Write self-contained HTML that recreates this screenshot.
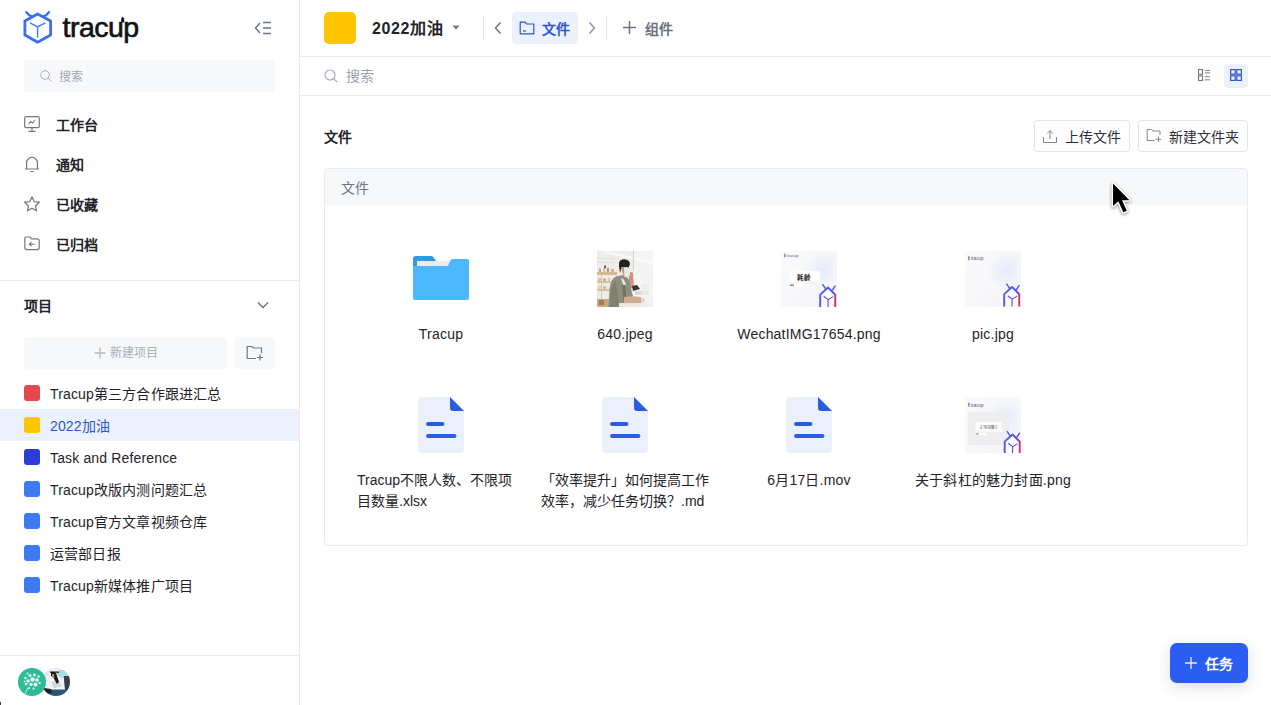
<!DOCTYPE html>
<html lang="zh-CN"><head><meta charset="utf-8">
<style>
*{box-sizing:border-box;margin:0;padding:0}
html,body{width:1271px;height:705px;overflow:hidden;background:#fff;font-family:"Liberation Sans",sans-serif;color:#1f2329}
.a{position:absolute}
.side{position:absolute;left:0;top:0;width:300px;height:705px;border-right:1px solid #e8eaee;background:#fff}
.navt{position:absolute;left:56px;font-size:14px;font-weight:bold;color:#1f2329;line-height:16px}
.nico{position:absolute;left:24px;width:16px;height:16px}
.proj{position:absolute;left:0;width:299px;height:32px}
.proj .sq{position:absolute;left:24px;top:8px;width:16px;height:16px;border-radius:3px}
.proj .t{position:absolute;left:50px;top:9px;font-size:14px;line-height:16px;letter-spacing:0.15px;color:#1f2329;white-space:nowrap}
.main{position:absolute;left:300px;top:0;width:971px;height:705px}
.item{position:absolute;width:184px;text-align:center}
.lblw{position:absolute;left:0;top:73px;width:184px;padding:0 8px;text-align:center;white-space:nowrap}
.lbl2{display:inline-block;text-align:left;font-size:14px;line-height:21px;letter-spacing:0.2px;color:#1f2329;word-break:break-all}
</style></head><body>
<div class="side">
  <!-- logo -->
  <svg class="a" style="left:0;top:0" width="60" height="50" viewBox="0 0 60 50">
    <path d="M37.6 14 L50.6 21 L50.6 35 L37.6 42.2 L24.9 35 L24.9 21 Z" fill="none" stroke="#3a6ff0" stroke-width="2.8" stroke-linejoin="round"/>
    <path d="M30 22.8 L37.6 26.8 L45.4 22.8 M37.6 26.8 L37.6 37.5" fill="none" stroke="#4a78ee" stroke-width="1.5"/>
    <path d="M26.3 12.2 Q28 15 32 16.5 M49 12.2 Q47.3 15 43.3 16.5" fill="none" stroke="#3a6ff0" stroke-width="2.4" stroke-linecap="round"/>
  </svg>
  <svg class="a" style="left:60px;top:8px" width="90" height="40" viewBox="0 0 90 40">
    <text x="2.5" y="28.8" font-family="Liberation Sans" font-size="28.5" letter-spacing="-0.5" fill="#131313" stroke="#131313" stroke-width="0.65">tracup</text>
    <path d="M61.2 14.5 V10.5 L62.7 8.8 L64.2 10.5 V14.5 Z" fill="#131313"/>
  </svg>
  <!-- collapse -->
  <svg class="a" style="left:254px;top:21px" width="18" height="14" viewBox="0 0 18 14">
    <path d="M6 2 L1.5 7 L6 12" fill="none" stroke="#6b7385" stroke-width="1.5"/>
    <path d="M9 1.5 H17 M9 7 H17 M9 12.5 H17" stroke="#6b7385" stroke-width="1.5"/>
  </svg>
  <!-- search -->
  <div class="a" style="left:24px;top:60px;width:251px;height:32px;background:#f7f8fa;border-radius:4px"></div>
  <svg class="a" style="left:40px;top:70px" width="12" height="12" viewBox="0 0 12 12">
    <circle cx="5" cy="5" r="4.3" fill="none" stroke="#a8aebb" stroke-width="1"/>
    <path d="M8.1 8.1 L11.4 11.4" stroke="#a8aebb" stroke-width="1"/>
  </svg>
  <div class="a" style="left:59px;top:69px;font-size:12px;line-height:16px;color:#a3a9b7">搜索</div>

  <!-- nav -->
  <svg class="nico" style="top:116px" viewBox="0 0 16 16">
    <rect x="0.7" y="0.7" width="14.6" height="11" rx="1.5" fill="none" stroke="#6f7789" stroke-width="1.2"/>
    <path d="M4.5 8 L6.5 5.5 L8.5 7 L11 4" fill="none" stroke="#6f7789" stroke-width="1.1"/>
    <path d="M8 12 V15 M4.5 15.3 H11.5" stroke="#6f7789" stroke-width="1.2"/>
  </svg>
  <div class="navt" style="top:117px">工作台</div>
  <svg class="nico" style="top:156px" viewBox="0 0 16 16">
    <path d="M2.6 13 V7 A5.4 5.6 0 0 1 13.4 7 V13" fill="none" stroke="#6f7789" stroke-width="1.2"/>
    <path d="M0.8 13 H15.2 M6.3 15.6 H9.7" stroke="#6f7789" stroke-width="1.2"/>
  </svg>
  <div class="navt" style="top:157px">通知</div>
  <svg class="nico" style="top:196px" viewBox="0 0 16 16">
    <path d="M8.00 0.90 L10.17 5.61 L15.32 6.22 L11.52 9.74 L12.53 14.83 L8.00 12.30 L3.47 14.83 L4.48 9.74 L0.68 6.22 L5.83 5.61 Z" fill="none" stroke="#6f7789" stroke-width="1.2" stroke-linejoin="round"/>
  </svg>
  <div class="navt" style="top:197px">已收藏</div>
  <svg class="nico" style="top:236px" viewBox="0 0 16 16">
    <path d="M0.8 3 Q0.8 1 2.8 1 H6 L7.6 2.8 H13.2 Q15.2 2.8 15.2 4.8 V11.6 Q15.2 13.6 13.2 13.6 H2.8 Q0.8 13.6 0.8 11.6 Z" fill="none" stroke="#6f7789" stroke-width="1.2" stroke-linejoin="round"/>
    <path d="M10.8 8.2 H5.4 M7.5 6.2 L5.4 8.2 L7.5 10.2" fill="none" stroke="#6f7789" stroke-width="1.1"/>
  </svg>
  <div class="navt" style="top:237px">已归档</div>

  <div class="a" style="left:0;top:280px;width:299px;height:1px;background:#e8eaee"></div>

  <div class="navt" style="left:24px;top:298px">项目</div>
  <svg class="a" style="left:257px;top:301px" width="12" height="9" viewBox="0 0 12 9">
    <path d="M1 1.5 L6 6.5 L11 1.5" fill="none" stroke="#6b7385" stroke-width="1.5"/>
  </svg>

  <div class="a" style="left:24px;top:337px;width:203px;height:32px;background:#f7f8fa;border-radius:4px"></div>
  <svg class="a" style="left:94px;top:347px" width="12" height="12" viewBox="0 0 12 12"><path d="M6 0.5 V11.5 M0.5 6 H11.5" stroke="#b4b9c4" stroke-width="1.3"/></svg>
  <div class="a" style="left:110px;top:345px;font-size:12px;line-height:16px;color:#a9aebb">新建项目</div>
  <div class="a" style="left:235px;top:337px;width:40px;height:32px;background:#f7f8fa;border-radius:4px"></div>
  <svg class="a" style="left:246px;top:345px" width="18" height="16" viewBox="0 0 18 16">
    <path d="M10 13.5 H1.2 V1.5 H6 L7.5 3 H15.5 V8" fill="none" stroke="#6f7789" stroke-width="1.2" stroke-linejoin="round"/>
    <path d="M14 9.5 V15.5 M11 12.5 H17" stroke="#6f7789" stroke-width="1.2"/>
  </svg>

  <div class="proj" style="top:377px"><div class="sq" style="background:#e5484d"></div><div class="t">Tracup第三方合作跟进汇总</div></div>
  <div class="proj" style="top:409px;background:#ebf1fd"><div class="sq" style="background:#ffc400"></div><div class="t" style="color:#2c56cc">2022加油</div></div>
  <div class="proj" style="top:441px"><div class="sq" style="background:#2a3bd6"></div><div class="t">Task and Reference</div></div>
  <div class="proj" style="top:473px"><div class="sq" style="background:#3d7bf5"></div><div class="t">Tracup改版内测问题汇总</div></div>
  <div class="proj" style="top:505px"><div class="sq" style="background:#3d7bf5"></div><div class="t">Tracup官方文章视频仓库</div></div>
  <div class="proj" style="top:537px"><div class="sq" style="background:#3d7bf5"></div><div class="t">运营部日报</div></div>
  <div class="proj" style="top:569px"><div class="sq" style="background:#3d7bf5"></div><div class="t">Tracup新媒体推广项目</div></div>

  <div class="a" style="left:0;top:655px;width:299px;height:1px;background:#e8eaee"></div>
  <!-- avatars -->
  <svg class="a" style="left:18px;top:668px" width="54" height="28" viewBox="0 0 54 28">
    <defs><clipPath id="c2"><circle cx="38" cy="14" r="14"/></clipPath></defs>
    <g clip-path="url(#c2)">
      <rect x="24" y="0" width="28" height="28" fill="#e4e8ec"/>
      <path d="M38 2 L52 2 L52 10 L40 10 Z" fill="#a9dbe3"/>
      <path d="M46 8 L52 8 L52 22 L46 22 Z" fill="#3b4046"/>
      <path d="M28 8 Q32 5 38 6 L46 12 L47 22 L28 23 Z" fill="#f2f3f5"/>
      <path d="M33 14 L40 12 L44 18 L36 20 Z" fill="#d5d9de"/>
      <path d="M32 1 L41 0.5 L41 4.5 L32 5 Z" fill="#f0f0f0"/>
      <rect x="32" y="3.5" width="9" height="1.3" fill="#222"/>
      <path d="M33 4 Q35 3 38 5 L41 14 L39 16 L35 9 L33 8 Z" fill="#17181a"/>
      <path d="M34 6 L36 6 L36.5 10 L34.5 9.5 Z" fill="#c08a6c"/>
      <rect x="24" y="21.5" width="28" height="7" fill="#2c5671"/>
      <path d="M26 20 L33 21 L34 25 L26 26 Z" fill="#1c2025"/>
    </g>
    <circle cx="14" cy="14" r="14" fill="#2bbc9a"/>
    <g fill="#e9fbf6">
      <circle cx="14.5" cy="11.5" r="2.2"/><circle cx="10" cy="13" r="1.8"/><circle cx="19" cy="12" r="1.8"/>
      <circle cx="12" cy="7.5" r="1.5"/><circle cx="16.5" cy="7" r="1.4"/><circle cx="20.5" cy="8.5" r="1.2"/>
      <circle cx="7.5" cy="10" r="1.2"/><circle cx="8" cy="16" r="1.3"/><circle cx="13" cy="16.5" r="1.7"/>
      <circle cx="17.5" cy="16.5" r="2"/><circle cx="21.5" cy="15" r="1.2"/><circle cx="11" cy="20" r="1.1"/>
      <circle cx="15.5" cy="20.5" r="1"/><circle cx="6.5" cy="13.5" r="0.9"/><circle cx="9.5" cy="5.5" r="0.9"/>
    </g>
    <path d="M10 20 Q8 23 7 26" fill="none" stroke="#e8fbf6" stroke-width="0.8"/>
  </svg>
</div>

<!-- MAIN -->
<div class="main">
  <!-- header -->
  <div class="a" style="left:24px;top:12px;width:32px;height:32px;background:#ffc400;border-radius:5px"></div>
  <div class="a" style="left:72px;top:20px;font-size:16px;font-weight:bold;line-height:18px;letter-spacing:0.6px;color:#1f2329">2022加油</div>
  <svg class="a" style="left:152px;top:25px" width="8" height="5" viewBox="0 0 8 5"><path d="M0.5 0.5 H7.5 L4 4.5 Z" fill="#6b7385"/></svg>
  <div class="a" style="left:183px;top:16px;width:1px;height:24px;background:#e3e5ea"></div>
  <svg class="a" style="left:193px;top:21px" width="10" height="14" viewBox="0 0 10 14"><path d="M7.5 1.5 L2.5 7 L7.5 12.5" fill="none" stroke="#6b7385" stroke-width="1.5"/></svg>
  <div class="a" style="left:212px;top:12px;width:66px;height:32px;background:#ebf1fd;border-radius:4px"></div>
  <svg class="a" style="left:219px;top:21px" width="16" height="14" viewBox="0 0 16 14">
    <path d="M1.2 1.2 H6 L7.5 3 H14.8 V12.8 H1.2 Z" fill="none" stroke="#2c56cc" stroke-width="1.2" stroke-linejoin="round"/>
    <path d="M4 10 H7" stroke="#2c56cc" stroke-width="1.2"/>
  </svg>
  <div class="a" style="left:242px;top:21px;font-size:14px;font-weight:bold;line-height:16px;color:#2c56cc">文件</div>
  <svg class="a" style="left:287px;top:21px" width="10" height="14" viewBox="0 0 10 14"><path d="M2.5 1.5 L7.5 7 L2.5 12.5" fill="none" stroke="#8c92a0" stroke-width="1.5"/></svg>
  <div class="a" style="left:306px;top:16px;width:1px;height:24px;background:#e3e5ea"></div>
  <svg class="a" style="left:322px;top:20px" width="15" height="15" viewBox="0 0 15 15"><path d="M7.5 1 V14 M1 7.5 H14" stroke="#6b7385" stroke-width="1.5"/></svg>
  <div class="a" style="left:345px;top:21px;font-size:14px;font-weight:bold;line-height:16px;color:#6b7385">组件</div>
  <div class="a" style="left:0;top:56px;width:971px;height:1px;background:#e8eaee"></div>

  <!-- search row -->
  <svg class="a" style="left:24px;top:69px" width="14" height="14" viewBox="0 0 14 14">
    <circle cx="6" cy="6" r="5" fill="none" stroke="#a3a9b7" stroke-width="1.2"/>
    <path d="M9.6 9.6 L13.2 13.2" stroke="#a3a9b7" stroke-width="1.2"/>
  </svg>
  <div class="a" style="left:46px;top:68px;font-size:14px;line-height:16px;color:#9ca3b2">搜索</div>
  <svg class="a" style="left:898px;top:69px" width="13" height="12" viewBox="0 0 13 12">
    <rect x="0.55" y="0.55" width="4" height="4.6" fill="none" stroke="#6f7686" stroke-width="1.1"/>
    <rect x="0.55" y="6.85" width="4" height="4.6" fill="none" stroke="#6f7686" stroke-width="1.1"/>
    <path d="M6.8 1.5 H12.2 M6.8 3.8 H12.2 M6.8 7.7 H12.2 M6.8 10.8 H12.2" stroke="#7d8494" stroke-width="1"/>
  </svg>
  <div class="a" style="left:924px;top:64px;width:24px;height:24px;background:#ebf1fd;border-radius:4px"></div>
  <svg class="a" style="left:930px;top:69px" width="12" height="12" viewBox="0 0 12 12">
    <rect x="0.6" y="0.6" width="4.6" height="4.6" fill="none" stroke="#2f55cc" stroke-width="1.2"/>
    <rect x="6.8" y="0.6" width="4.6" height="4.6" fill="none" stroke="#2f55cc" stroke-width="1.2"/>
    <rect x="0.6" y="6.8" width="4.6" height="4.6" fill="none" stroke="#2f55cc" stroke-width="1.2"/>
    <rect x="6.8" y="6.8" width="4.6" height="4.6" fill="none" stroke="#2f55cc" stroke-width="1.2"/>
  </svg>
  <div class="a" style="left:0;top:95px;width:971px;height:1px;background:#e8eaee"></div>

  <!-- title & buttons -->
  <div class="a" style="left:24px;top:129px;font-size:14px;font-weight:bold;line-height:16px;color:#1f2329">文件</div>
  <div class="a" style="left:734px;top:120px;width:96px;height:32px;border:1px solid #e3e5ea;border-radius:4px"></div>
  <svg class="a" style="left:742px;top:129px" width="16" height="15" viewBox="0 0 16 15">
    <path d="M1.5 8 V13.5 H14.5 V8" fill="none" stroke="#7d8494" stroke-width="1"/>
    <path d="M8 10 V1.8 M5 4.6 L8 1.6 L11 4.6" fill="none" stroke="#7d8494" stroke-width="1"/>
  </svg>
  <div class="a" style="left:765px;top:129px;font-size:14px;line-height:16px;color:#2b2f36">上传文件</div>
  <div class="a" style="left:838px;top:120px;width:110px;height:32px;border:1px solid #e3e5ea;border-radius:4px"></div>
  <svg class="a" style="left:846px;top:128px" width="16" height="15" viewBox="0 0 16 15">
    <path d="M8.5 12.5 H1.2 V1.5 H5.5 L7 3 H14 V7" fill="none" stroke="#7d8494" stroke-width="1" stroke-linejoin="round"/>
    <path d="M12.5 8.5 V14 M9.8 11.3 H15.2" stroke="#7d8494" stroke-width="1"/>
  </svg>
  <div class="a" style="left:869px;top:129px;font-size:14px;line-height:16px;color:#2b2f36">新建文件夹</div>

  <!-- card -->
  <div class="a" style="left:24px;top:168px;width:924px;height:378px;border:1px solid #e8eaee;border-radius:4px;overflow:hidden">
    <div class="a" style="left:0;top:0;width:922px;height:36px;background:#f7f8fa"></div>
    <div class="a" style="left:16px;top:11px;font-size:14px;line-height:16px;color:#6b7385">文件</div>
  </div>
</div>

<!-- grid items (absolute to page) -->
<div id="grid">
  <div class="item" style="left:349px;top:251px">
    <svg class="a" style="left:64px;top:5px" width="56" height="45" viewBox="0 0 56 45">
      <path d="M0 3 Q0 0 3 0 H18 Q20 0 21 2 L23 5 H0 Z" fill="#2e9ae0"/>
      <rect x="0" y="3" width="20" height="10" fill="#2e9ae0"/>
      <path d="M4 5 H36 V12 H4 Z" fill="#e9edf1"/>
      <path d="M0 10 H35 L37 5 Q38 3 40 3 H54 Q56 3 56 5 V42 Q56 44 54 44 H2 Q0 44 0 42 Z" fill="#4cb8fb"/>
    </svg>
    <div class="lblw"><span class="lbl2">Tracup</span></div>
  </div>
  <div class="item" style="left:533px;top:251px">
    <svg class="a" style="left:64px;top:0" width="56" height="56" viewBox="0 0 56 56">
      <defs><filter id="pb" x="0" y="0" width="1" height="1"><feGaussianBlur stdDeviation="0.45"/></filter><clipPath id="pc"><rect width="56" height="56"/></clipPath></defs>
      <g filter="url(#pb)" clip-path="url(#pc)">
      <rect x="-2" y="-2" width="60" height="60" fill="#ecebe8"/>
      <rect x="-2" y="-2" width="40" height="24" fill="#eeedeb"/>
      <rect x="36" y="-2" width="22" height="60" fill="#f4f4f3"/>
      <path d="M8 0 L56 10 V13 L8 2 Z" fill="#fafaf9"/>
      <rect x="36" y="0" width="0.8" height="20" fill="#c9cbcc"/>
      <rect x="0" y="7" width="18" height="1" fill="#e2dfda"/><rect x="0" y="11" width="18" height="1" fill="#e2dfda"/>
      <rect x="-2" y="21" width="22" height="3" fill="#d6b98e"/>
      <rect x="2" y="17.5" width="2" height="3.5" fill="#c9a67a"/><rect x="6" y="18" width="2.5" height="3" fill="#e4c48e"/><rect x="10" y="17" width="2" height="4" fill="#b7946e"/><rect x="14" y="18" width="3" height="3" fill="#dcb37e"/><rect x="7" y="14.5" width="2" height="3" fill="#5b6b7a"/>
      <rect x="-2" y="30" width="18" height="2" fill="#d9c3a2"/>
      <rect x="1" y="27" width="3" height="3" fill="#d6c0a0"/><rect x="6" y="27.5" width="3" height="2.5" fill="#c8ad88"/><rect x="11" y="27" width="2" height="3" fill="#e0c9a5"/>
      <rect x="-2" y="38" width="16" height="2" fill="#d7c09e"/>
      <rect x="1" y="35" width="3" height="3" fill="#e3d3b8"/><rect x="6" y="35.5" width="3" height="2.5" fill="#cfb592"/>
      <rect x="4" y="22" width="0.8" height="34" fill="#cdbfae"/>
      <rect x="-2" y="48" width="14" height="10" fill="#c9a880"/>
      <rect x="2" y="49" width="5" height="5" fill="#9e7a55"/>
      <rect x="36" y="24" width="20" height="22" fill="#f6f6f6"/>
      <rect x="44" y="33" width="8" height="10" fill="#e6e6e4"/>
      <path d="M32 22 Q34 20 36 22 L37 37 L32 37 Z" fill="#d68f86"/>
      <path d="M35 35 L40 34 L43 38 L36 40 Z" fill="#3a3532"/>
      <rect x="38" y="40" width="14" height="4" fill="#dcd9d4"/>
      <path d="M11.5 56 L12.5 38 Q13.5 28 19 25.5 L26 24 Q32 26 33 32 L35 42 L37 48 L34 56 Z" fill="#8d8e7e"/>
      <path d="M14 40 Q15 32 19 30 L22 56 H13 Z" fill="#7f8072"/>
      <path d="M25 30 L27 56 L30 56 L28 30 Z" fill="#6f7266"/>
      <path d="M24 27 Q28 28 29 34 L26 34 Z" fill="#e9e6df"/>
      <path d="M22 15 Q21 8.5 27 8.2 Q32.5 8.5 33 13 L31 18 Q27 16.5 24 18 L23 22 Z" fill="#25201d"/>
      <path d="M24 16 Q25 22 27 25 L29 25 L28 16 Z" fill="#c79b7c"/>
      <path d="M27 16.5 Q31 15 33 17.5 L33 24 Q31 27 27.5 26 Z" fill="#eceae6"/>
      <path d="M27 46 Q35 44.5 43 46 L48 48 L47 53 L27 53 Z" fill="#d0ad92"/>
      <rect x="22" y="52" width="34" height="4" fill="#ebe7e0"/>
      <rect x="44" y="22" width="12" height="34" fill="#f3f3f2" opacity="0.6"/>
      </g>
    </svg>
    <div class="lblw"><span class="lbl2">640.jpeg</span></div>
  </div>
  <div class="item" style="left:717px;top:251px">
    <svg class="a" style="left:64px;top:0" width="56" height="56" viewBox="0 0 56 56">
      <defs><linearGradient id="bga" x1="0" y1="0" x2="1" y2="1"><stop offset="0" stop-color="#fafafb"/><stop offset="0.55" stop-color="#f6f7f9"/><stop offset="1" stop-color="#f7f6f8"/></linearGradient>
      <radialGradient id="bla" cx="0.75" cy="0.35" r="0.35"><stop offset="0" stop-color="#e8ecfa"/><stop offset="1" stop-color="#e8ecfa" stop-opacity="0"/></radialGradient>
      <linearGradient id="hga" gradientUnits="userSpaceOnUse" x1="38" y1="40" x2="56" y2="50"><stop offset="0" stop-color="#3a6cf6"/><stop offset="0.6" stop-color="#6a40e2"/><stop offset="1" stop-color="#e2364c"/></linearGradient></defs>
      <rect width="56" height="56" fill="url(#bga)"/>
      <rect width="56" height="56" fill="url(#bla)"/>
      <rect x="3" y="2.6" width="1.6" height="4" rx="0.8" fill="#7a8ce8"/><text x="5.6" y="6.4" font-family="Liberation Sans" font-size="4.2" fill="#555a66">tracup</text>
      <rect x="9" y="20.3" width="30" height="10.4" fill="#ffffff"/>
      <text x="16.3" y="28.8" font-family="Liberation Sans" font-size="6.5" font-weight="bold" textLength="14" lengthAdjust="spacingAndGlyphs" fill="#2a2a2a">耗龄</text>
      <rect x="8.4" y="32.7" width="14" height="3" fill="#ffffff"/><rect x="8.8" y="33.6" width="4" height="1.2" fill="#666"/>
      <g transform="translate(0,0)">
      <path d="M39.2 56 V43.6 L47 36.5 L54.2 43.6 V56" fill="#ffffff" fill-opacity="0.6" stroke="url(#hga)" stroke-width="1.9" stroke-linejoin="round"/>
      <path d="M42.7 45.3 L47.1 48.6 L52.1 45.6 M47.1 48.6 V56" fill="none" stroke="#5b4bd8" stroke-width="1.1"/>
      <path d="M41.8 33.7 L44.6 37.8 M54 35.2 L51.6 38.8" fill="none" stroke="#4a5af0" stroke-width="1.5" stroke-linecap="round"/>
      </g>
    </svg>
    <div class="lblw"><span class="lbl2">WechatIMG17654.png</span></div>
  </div>
  <div class="item" style="left:901px;top:251px">
    <svg class="a" style="left:64px;top:0" width="56" height="56" viewBox="0 0 56 56">
      <defs><linearGradient id="bgb" x1="0" y1="0" x2="1" y2="1"><stop offset="0" stop-color="#fafafb"/><stop offset="0.55" stop-color="#f6f7f9"/><stop offset="1" stop-color="#f7f6f8"/></linearGradient>
      <radialGradient id="blb" cx="0.75" cy="0.35" r="0.35"><stop offset="0" stop-color="#e8ecfa"/><stop offset="1" stop-color="#e8ecfa" stop-opacity="0"/></radialGradient>
      <linearGradient id="hgb" gradientUnits="userSpaceOnUse" x1="38" y1="40" x2="56" y2="50"><stop offset="0" stop-color="#3a6cf6"/><stop offset="0.6" stop-color="#6a40e2"/><stop offset="1" stop-color="#e2364c"/></linearGradient></defs>
      <rect width="56" height="56" fill="url(#bgb)"/>
      <rect width="56" height="56" fill="url(#blb)"/>
      <rect x="3" y="5" width="1.6" height="4.5" rx="0.8" fill="#7a8ce8"/><text x="5.8" y="9.2" font-family="Liberation Sans" font-size="4.6" fill="#555a66">tracup</text>
      <g transform="translate(0,-0.5)">
      <path d="M39.2 56 V43.6 L47 36.5 L54.2 43.6 V56" fill="#ffffff" fill-opacity="0.6" stroke="url(#hgb)" stroke-width="1.9" stroke-linejoin="round"/>
      <path d="M42.7 45.3 L47.1 48.6 L52.1 45.6 M47.1 48.6 V56" fill="none" stroke="#5b4bd8" stroke-width="1.1"/>
      <path d="M41.8 33.7 L44.6 37.8 M54 35.2 L51.6 38.8" fill="none" stroke="#4a5af0" stroke-width="1.5" stroke-linecap="round"/>
      </g>
    </svg>
    <div class="lblw"><span class="lbl2">pic.jpg</span></div>
  </div>
  <div class="item" style="left:349px;top:397px">
    <svg class="a" style="left:69px;top:0px" width="46" height="56" viewBox="0 0 46 56">
      <path d="M4 0 H32 L46 14 V52 Q46 56 42 56 H4 Q0 56 0 52 V4 Q0 0 4 0 Z" fill="#ebf0fc"/>
      <path d="M32 0 L46 14 H35 Q32 14 32 11 Z" fill="#2a5ce6"/>
      <path d="M10 27 H24.5 M10 39 H36.5" stroke="#2a5ce6" stroke-width="3.8" stroke-linecap="round"/>
    </svg>
    <div class="lblw"><span class="lbl2" style="width:168px;white-space:nowrap;letter-spacing:0">Tracup不限人数、不限项<br>目数量.xlsx</span></div>
  </div>
  <div class="item" style="left:533px;top:397px">
    <svg class="a" style="left:69px;top:0px" width="46" height="56" viewBox="0 0 46 56">
      <path d="M4 0 H32 L46 14 V52 Q46 56 42 56 H4 Q0 56 0 52 V4 Q0 0 4 0 Z" fill="#ebf0fc"/>
      <path d="M32 0 L46 14 H35 Q32 14 32 11 Z" fill="#2a5ce6"/>
      <path d="M10 27 H24.5 M10 39 H36.5" stroke="#2a5ce6" stroke-width="3.8" stroke-linecap="round"/>
    </svg>
    <div class="lblw"><span class="lbl2" style="width:168px;white-space:nowrap;letter-spacing:0">「效率提升」如何提高工作<br>效率，减少任务切换？.md</span></div>
  </div>
  <div class="item" style="left:717px;top:397px">
    <svg class="a" style="left:69px;top:0px" width="46" height="56" viewBox="0 0 46 56">
      <path d="M4 0 H32 L46 14 V52 Q46 56 42 56 H4 Q0 56 0 52 V4 Q0 0 4 0 Z" fill="#ebf0fc"/>
      <path d="M32 0 L46 14 H35 Q32 14 32 11 Z" fill="#2a5ce6"/>
      <path d="M10 27 H24.5 M10 39 H36.5" stroke="#2a5ce6" stroke-width="3.8" stroke-linecap="round"/>
    </svg>
    <div class="lblw"><span class="lbl2">6月17日.mov</span></div>
  </div>
  <div class="item" style="left:901px;top:397px">
    <svg class="a" style="left:64px;top:0" width="56" height="56" viewBox="0 0 56 56">
      <defs><linearGradient id="bgc" x1="0" y1="0" x2="1" y2="1"><stop offset="0" stop-color="#fafafb"/><stop offset="0.55" stop-color="#f6f7f9"/><stop offset="1" stop-color="#f7f6f8"/></linearGradient>
      <radialGradient id="blc" cx="0.75" cy="0.35" r="0.35"><stop offset="0" stop-color="#e8ecfa"/><stop offset="1" stop-color="#e8ecfa" stop-opacity="0"/></radialGradient>
      <linearGradient id="hgc" gradientUnits="userSpaceOnUse" x1="38" y1="40" x2="56" y2="50"><stop offset="0" stop-color="#3a6cf6"/><stop offset="0.6" stop-color="#6a40e2"/><stop offset="1" stop-color="#e2364c"/></linearGradient></defs>
      <rect width="56" height="56" fill="url(#bgc)"/>
      <rect width="56" height="56" fill="url(#blc)"/>
      <rect x="3" y="5.4" width="1.6" height="4.5" rx="0.8" fill="#7a8ce8"/><text x="5.8" y="9.6" font-family="Liberation Sans" font-size="4.6" fill="#555a66">tracup</text>
      <rect x="3" y="15" width="41" height="33" rx="1" fill="#eeeef0"/>
      <rect x="10.4" y="25.3" width="26.3" height="9.4" fill="#ffffff"/>
      <text x="15.3" y="32.3" font-family="Liberation Sans" font-size="4" textLength="17" lengthAdjust="spacingAndGlyphs" fill="#333">关于斜杠的魅力</text>
      <rect x="10.4" y="35.7" width="11" height="2.5" fill="#ffffff"/><rect x="10.8" y="36.4" width="3" height="1" fill="#777"/>
      <g transform="translate(0.5,1)">
      <path d="M39.2 56 V43.6 L47 36.5 L54.2 43.6 V56" fill="#ffffff" fill-opacity="0.6" stroke="url(#hgc)" stroke-width="1.9" stroke-linejoin="round"/>
      <path d="M42.7 45.3 L47.1 48.6 L52.1 45.6 M47.1 48.6 V56" fill="none" stroke="#5b4bd8" stroke-width="1.1"/>
      <path d="M41.8 33.7 L44.6 37.8 M54 35.2 L51.6 38.8" fill="none" stroke="#4a5af0" stroke-width="1.5" stroke-linecap="round"/>
      </g>
    </svg>
    <div class="lblw"><span class="lbl2">关于斜杠的魅力封面.png</span></div>
  </div>
</div>
<div class="a" style="left:1170px;top:643px;width:78px;height:40px;background:#2b5ef0;border-radius:7px;box-shadow:0 4px 14px rgba(30,50,90,0.16)"></div>
<svg class="a" style="left:1185px;top:657px" width="12" height="12" viewBox="0 0 12 12"><path d="M6 0 V12 M0 6 H12" stroke="#dfe7ff" stroke-width="1.4"/></svg>
<div class="a" style="left:1205px;top:656px;font-size:14px;font-weight:bold;line-height:16px;color:#fff">任务</div>
<svg class="a" style="left:1108px;top:178px;overflow:visible;filter:drop-shadow(0.5px 1.5px 1.6px rgba(0,0,0,0.45))" width="22" height="34" viewBox="0 0 22 34">
  <path transform="translate(5,5.5)" d="M0 0 L0 22.6 L5.3 17.7 L10.4 28.8 L13.8 27.3 L9.1 16.7 L16.5 16.7 Z" fill="#000" stroke="#fff" stroke-width="3" stroke-linejoin="round" paint-order="stroke"/>
</svg>
<div class="a" style="left:0;top:702px;width:1px;height:3px;background:#33434c"></div>
</body></html>
